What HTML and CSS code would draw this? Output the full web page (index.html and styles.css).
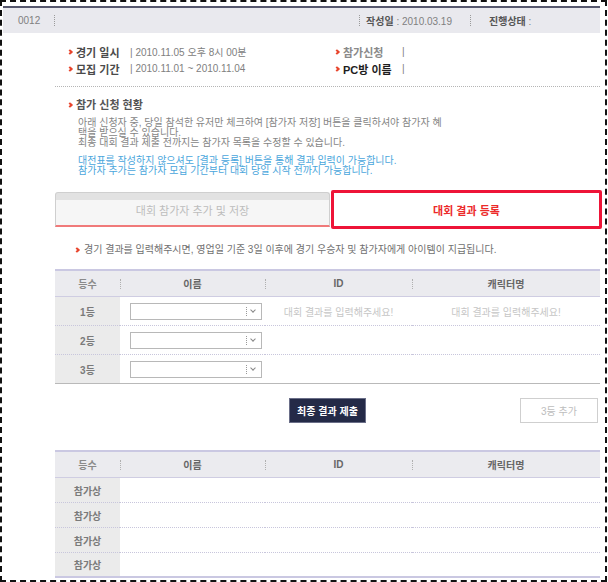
FILE: index.html
```html
<!DOCTYPE html>
<html lang="ko">
<head>
  <meta charset="UTF-8">
  <title>대회 결과 등록</title>
  <link rel="stylesheet" href="styles.css">
</head>
<body>
  <div class="frame">
    <div class="topbar">
      <span class="no">0012</span>
      <span class="vsep"></span>
      <div class="topbar-right">
        <span class="vsep"></span>
        <span class="meta date"><b>작성일</b> : 2010.03.19</span>
        <span class="vsep"></span>
        <span class="meta state"><b>진행상태</b> :</span>
      </div>
    </div>

    <div class="content">
      <div class="info">
        <div class="info-row bullet"><span class="lbl">경기 일시</span><span class="val">| 2010.11.05 오후 8시 00분</span></div>
        <div class="info-row bullet"><span class="lbl wide light">참가신청</span><span class="val">|</span></div>
        <div class="info-row bullet"><span class="lbl">모집 기간</span><span class="val">| 2010.11.01 ~ 2010.11.04</span></div>
        <div class="info-row bullet"><span class="lbl wide dark">PC방 이름</span><span class="val">|</span></div>
      </div>

      <div class="rule"></div>

      <h3 class="sec-title bullet">참가 신청 현황</h3>
      <p class="desc">아래 신청자 중, 당일 참석한 유저만 체크하여 [참가자 저장] 버튼을 클릭하셔야 참가자 혜<br>택을 받으실 수 있습니다.<br>최종 대회 결과 제출 전까지는 참가자 목록을 수정할 수 있습니다.</p>
      <p class="desc blue">대전표를 작성하지 않으셔도 [결과 등록] 버튼을 통해 결과 입력이 가능합니다.<br>참가자 추가는 참가자 모집 기간부터 대회 당일 시작 전까지 가능합니다.</p>

      <div class="tabs">
        <div class="tab tab-off">대회 참가자 추가 및 저장</div>
        <div class="tab tab-on">대회 결과 등록</div>
      </div>

      <p class="notice bullet">경기 결과를 입력해주시면, 영업일 기준 3일 이후에 경기 우승자 및 참가자에게 아이템이 지급됩니다.</p>

      <table class="grid result">
        <colgroup><col class="c1"><col class="c2"><col class="c3"><col class="c4"></colgroup>
        <thead>
          <tr><th>등수</th><th>이름</th><th>ID</th><th>캐릭터명</th></tr>
        </thead>
        <tbody>
          <tr>
            <td class="rank">1등</td>
            <td><div class="sel"><span class="sel-div"></span><span class="caret"></span></div></td>
            <td class="ph">대회 결과를 입력해주세요!</td>
            <td class="ph">대회 결과를 입력해주세요!</td>
          </tr>
          <tr>
            <td class="rank">2등</td>
            <td><div class="sel"><span class="sel-div"></span><span class="caret"></span></div></td>
            <td></td>
            <td></td>
          </tr>
          <tr>
            <td class="rank">3등</td>
            <td><div class="sel"><span class="sel-div"></span><span class="caret"></span></div></td>
            <td></td>
            <td></td>
          </tr>
        </tbody>
      </table>

      <div class="actions">
        <button class="btn-submit">최종 결과 제출</button>
        <button class="btn-add">3등 추가</button>
      </div>

      <table class="grid joined">
        <colgroup><col class="c1"><col class="c2"><col class="c3"><col class="c4"></colgroup>
        <thead>
          <tr><th>등수</th><th>이름</th><th>ID</th><th>캐릭터명</th></tr>
        </thead>
        <tbody>
          <tr><td class="rank">참가상</td><td></td><td></td><td></td></tr>
          <tr><td class="rank">참가상</td><td></td><td></td><td></td></tr>
          <tr><td class="rank">참가상</td><td></td><td></td><td></td></tr>
          <tr><td class="rank">참가상</td><td></td><td></td><td></td></tr>
        </tbody>
      </table>
    </div>
  </div>
</body>
</html>
```

FILE: styles.css
```css
* {
  box-sizing: border-box;
}

body {
  margin: 0;
  font-family: "Liberation Sans", "Noto Sans CJK KR", sans-serif;
  font-size: 10px;
  color: #7a7a7a;
  background: #fff;
}

.frame {
  width: 607px;
  height: 582px;
  border: 2px dashed #111;
  overflow: hidden;
}

/* top bar */
.topbar {
  display: flex;
  align-items: center;
  height: 27px;
  margin: 4px 5px 0 1px;
  padding-left: 15px;
  border-top: 2px solid #55566c;
  background: #e9e9ee;
  color: #808080;
}

.no {
  width: 22px;
}

.vsep {
  display: inline-block;
  width: 1px;
  height: 11px;
  border-left: 1px dotted #9a9a9a;
}

.topbar > .vsep {
  margin-left: 14px;
}

.topbar-right {
  display: flex;
  align-items: center;
  margin-left: auto;
}

.meta b {
  color: #555;
}

.date {
  margin: 0 18px 0 6px;
}

.state {
  width: 129px;
  padding-left: 18px;
}

/* red bullet */
.bullet::before {
  content: "";
  display: inline-block;
  width: 2px;
  height: 2px;
  border-top: 2px solid #e8452c;
  border-right: 2px solid #e8452c;
  transform: rotate(45deg);
  margin: 0 4px 0 -4px;
  flex: none;
}

.content {
  margin: 0 5px 0 53px;
}

/* info */
.info {
  display: grid;
  grid-template-columns: 267px 1fr;
  margin-top: 10px;
  padding-left: 17px;
}

.info-row {
  display: flex;
  align-items: center;
  height: 17px;
}

.lbl {
  width: 54px;
  font-size: 11px;
  font-weight: bold;
  color: #4a4a4a;
}

.lbl.wide {
  width: 59px;
}

.lbl.light {
  color: #8a8a8a;
}

.lbl.dark {
  color: #1e1e1e;
}

.val {
  color: #808080;
}

.rule {
  margin-top: 9px;
  border-top: 1px dotted #b5b5b5;
}

.sec-title {
  margin: 10px 0 0;
  padding-left: 17px;
  line-height: 16px;
  font-size: 11px;
  font-weight: bold;
  color: #555;
}

.sec-title::before {
  vertical-align: 2px;
}

.desc {
  margin: 5px 0 0;
  padding-left: 23px;
  line-height: 10px;
  color: #858585;
}

.desc.blue {
  margin-top: 8px;
  color: #4aa6dc;
}

/* tabs */
.tabs {
  display: flex;
  align-items: center;
  gap: 1px;
  height: 39px;
  margin: 14px -2px 0 0;
}

.tab {
  display: flex;
  align-items: center;
  justify-content: center;
}

.tab-off {
  width: 275px;
  height: 35px;
  padding-top: 2px;
  border: 1px solid #cfcfcf;
  border-bottom: 2px solid #f07a7a;
  border-radius: 3px 3px 0 0;
  background: linear-gradient(#e2e2e2 0 7px, #f6f6f6 7px);
  color: #bdbdbd;
  font-size: 11px;
}

.tab-on {
  flex: 1;
  height: 39px;
  border: 3px solid #ee1438;
  border-radius: 2px;
  color: #ec2a2a;
  font-size: 11px;
  font-weight: bold;
}

.notice {
  display: flex;
  align-items: center;
  margin: 13px 0 0;
  padding-left: 23px;
  line-height: 16px;
  color: #707070;
}

.notice::before {
  margin: 0 5px 0 -3px;
}

/* tables */
.grid {
  width: 100%;
  border-collapse: separate;
  border-spacing: 0;
  table-layout: fixed;
  border-top: 2px solid #cac8e2;
}

.grid .c1 { width: 65px; }
.grid .c2 { width: 145px; }
.grid .c3 { width: 147px; }
.grid .c4 { width: 188px; }

.grid th {
  position: relative;
  height: 26px;
  padding: 0;
  background: #ebebef;
  border-bottom: 1px solid #cfcde2;
  font-size: 10px;
  font-weight: bold;
  color: #666;
}

.grid th:first-child {
  color: #8a8a8a;
}

.grid th + th::before {
  content: "";
  position: absolute;
  left: 0;
  top: 8px;
  height: 10px;
  border-left: 1px dotted #b0b0b0;
}

.grid td {
  padding: 0;
  border-bottom: 1px dotted #c8c6dc;
  vertical-align: middle;
}

.result {
  margin-top: 11px;
}

.result td {
  height: 29px;
}

.result tr:last-child td {
  border-bottom: 1px solid #b9b9b9;
}

.joined {
  margin-top: 27px;
}

.joined td {
  height: 25px;
}

.joined tr:last-child td {
  border-bottom: 2px solid #cac8e2;
}

.grid td.rank {
  background: #ebebeb;
  text-align: center;
  font-weight: bold;
  color: #7a7a7a;
}

.grid td.ph {
  text-align: center;
  color: #c6c6c6;
}

.sel {
  display: flex;
  align-items: center;
  justify-content: flex-end;
  width: 132px;
  height: 17px;
  margin-left: 10px;
  border: 1px solid #b8b8b8;
  background: #fff;
}

.sel-div {
  width: 1px;
  height: 9px;
  border-left: 1px dotted #999;
  margin-right: 4px;
}

.caret {
  width: 4px;
  height: 4px;
  margin: 0 6px 3px 0;
  border-right: 1px solid #888;
  border-bottom: 1px solid #888;
  transform: rotate(45deg);
}

/* buttons */
.actions {
  display: grid;
  grid-template-columns: 1fr auto 1fr;
  align-items: center;
  margin-top: 14px;
}

.actions button {
  height: 25px;
  padding: 0;
  font-family: inherit;
  font-size: 10px;
}

.btn-submit {
  grid-column: 2;
  width: 77px;
  border: 1px solid #6a6e88;
  background: #242a47;
  color: #fff;
  font-weight: bold;
}

.btn-add {
  grid-column: 3;
  justify-self: end;
  width: 78px;
  margin-right: 2px;
  border: 1px solid #cfcfcf;
  background: #fff;
  color: #bdbdbd;
}
```
